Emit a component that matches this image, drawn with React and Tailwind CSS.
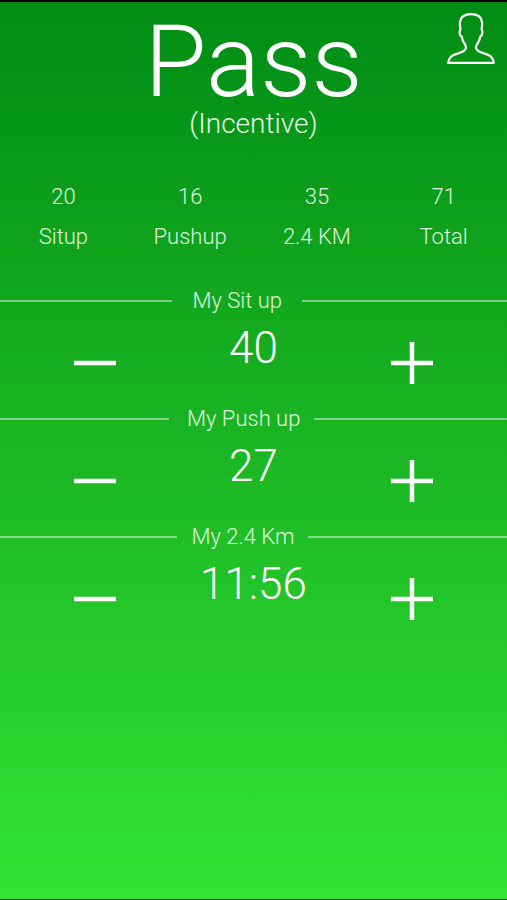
import { useState } from 'react';

const scores = [
  { value: 20, label: 'Situp' },
  { value: 16, label: 'Pushup' },
  { value: 35, label: '2.4 KM' },
  { value: 71, label: 'Total' },
];

const formatTime = (seconds) => {
  const min = Math.floor(seconds / 60);
  const sec = String(seconds % 60).padStart(2, '0');
  return `${min}:${sec}`;
};

const ProfileIcon = () => (
  <svg viewBox="0 0 48 52" className="w-12 h-13" fill="none" stroke="currentColor" strokeWidth="2.2" strokeLinejoin="round">
    <path d="M1.200 50.800H46.800C46.300 46.500 44.400 44 40.500 42.600L35 40.700C31.500 39.500 29 38 29 35.500C29 33 30.500 31.800 31.700 29.500C32.600 27.800 32.800 26.500 33.200 24.800C34.800 23.800 35.600 21.500 35.400 19.500C35.300 18.600 34.900 18 34.600 17.500C35 15 35.300 12.500 35 10C34.300 4.600 30 2.200 24 2.200C18 2.200 13.700 4.600 13 10C12.700 12.500 13 15 13.400 17.500C13.100 18 12.700 18.600 12.600 19.500C12.400 21.500 13.200 23.800 14.800 24.800C15.200 26.500 15.400 27.800 16.300 29.500C17.500 31.800 19 33 19 35.500C19 38 16.500 39.500 13 40.700L7.500 42.600C3.600 44 1.700 46.500 1.200 50.800Z" />
  </svg>
);

const MinusIcon = () => (
  <svg viewBox="0 0 44 44" className="w-11 h-11" stroke="currentColor" strokeWidth="4.500">
    <path d="M1 22h42" />
  </svg>
);

const PlusIcon = () => (
  <svg viewBox="0 0 44 44" className="w-11 h-11" stroke="currentColor" strokeWidth="4.500">
    <path d="M1 22h42M22 1v42" />
  </svg>
);

const Counter = ({ label, value, lineClass, labelClass, onMinus, onPlus }) => (
  <section>
    <div className="flex items-center">
      <div className={`h-[2px] bg-white/45 ${lineClass}`}></div>
      <h2 className={`text-[22px] leading-6 text-white/85 ${labelClass}`}>{label}</h2>
      <div className="h-[2px] flex-1 bg-white/45"></div>
    </div>
    <div className="grid grid-cols-3 items-start justify-items-center px-4 pb-[24px]">
      <button type="button" aria-label={`Decrease ${label}`} onClick={onMinus} className="mt-7">
        <MinusIcon />
      </button>
      <output className="text-[44px] leading-[70px]">{value}</output>
      <button type="button" aria-label={`Increase ${label}`} onClick={onPlus} className="mt-7">
        <PlusIcon />
      </button>
    </div>
  </section>
);

const App = () => {
  const [situp, setSitup] = useState(40);
  const [pushup, setPushup] = useState(27);
  const [runTime, setRunTime] = useState(716);

  return (
    <main className="min-h-screen border-t-2 border-b border-t-black border-b-[#0a4a0c] bg-linear-to-b from-[#008c14] via-[#18b222] via-45% to-[#33e335] font-['Roboto',sans-serif] font-light text-white">
      <header className="relative pt-3 text-center">
        <h1 className="text-[101px] leading-24">Pass</h1>
        <p className="text-[28px] leading-7 text-white/90">(Incentive)</p>
        <button type="button" aria-label="Profile" className="absolute top-2.5 right-3">
          <ProfileIcon />
        </button>
      </header>

      {/* Points per station */}
      <dl className="mt-[39px] grid grid-cols-4 text-center text-[22px] leading-10 text-white/85">
        {scores.map((score) => (
          <div key={score.label} className="flex flex-col-reverse">
            <dt>{score.label}</dt>
            <dd>{score.value}</dd>
          </div>
        ))}
      </dl>

      {/* Inputs */}
      <div className="mt-8 grid auto-rows-[118px]">
        <Counter
          label="My Sit up"
          value={situp}
          lineClass="w-[34%]"
          labelClass="px-5"
          onMinus={() => setSitup(Math.max(0, situp - 1))}
          onPlus={() => setSitup(situp + 1)}
        />
        <Counter
          label="My Push up"
          value={pushup}
          lineClass="w-1/3"
          labelClass="pl-4.5 pr-3.5"
          onMinus={() => setPushup(Math.max(0, pushup - 1))}
          onPlus={() => setPushup(pushup + 1)}
        />
        <Counter
          label="My 2.4 Km"
          value={formatTime(runTime)}
          lineClass="w-[35%]"
          labelClass="px-3.5"
          onMinus={() => setRunTime(Math.max(0, runTime - 1))}
          onPlus={() => setRunTime(runTime + 1)}
        />
      </div>
    </main>
  );
};

export default App;
